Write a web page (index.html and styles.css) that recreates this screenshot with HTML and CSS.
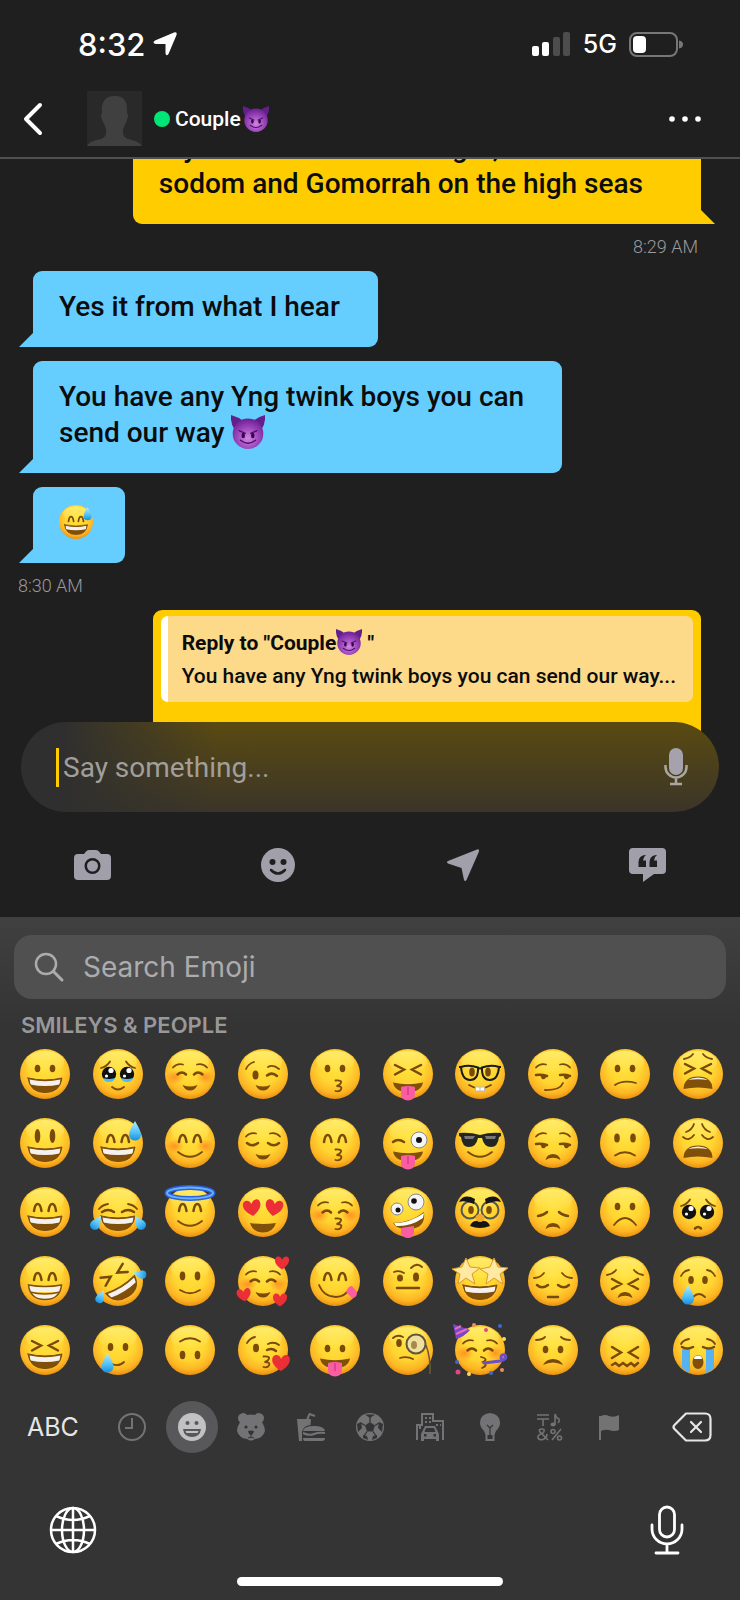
FILE: index.html
```html
<!DOCTYPE html>
<html lang="en">
<head>
  <meta charset="UTF-8">
  <meta name="viewport" content="width=device-width, initial-scale=1.0">
  <title>Chat</title>
  <link rel="stylesheet" href="styles.css">
</head>
<body>

<!-- shared emoji parts, drawn on a 50 x 50 face -->
<svg class="sprite" aria-hidden="true">
  <defs>
    <radialGradient id="skin" cx="50%" cy="38%" r="64%">
      <stop offset="0" stop-color="#ffe23c"/>
      <stop offset="0.5" stop-color="#ffd531"/>
      <stop offset="0.8" stop-color="#fdb524"/>
      <stop offset="1" stop-color="#e58a0c"/>
    </radialGradient>
    <linearGradient id="shine" x1="0" y1="0" x2="0" y2="1">
      <stop offset="0" stop-color="#fff27a" stop-opacity="0.8"/>
      <stop offset="1" stop-color="#fff27a" stop-opacity="0"/>
    </linearGradient>
    <radialGradient id="violet" cx="50%" cy="65%" r="60%">
      <stop offset="0" stop-color="#cf86e0"/>
      <stop offset="0.5" stop-color="#a44fc2"/>
      <stop offset="1" stop-color="#74259a"/>
    </radialGradient>
    <linearGradient id="water" x1="0" y1="0" x2="0" y2="1">
      <stop offset="0" stop-color="#b5ecff"/>
      <stop offset="0.6" stop-color="#4fc0f6"/>
      <stop offset="1" stop-color="#1b8ee0"/>
    </linearGradient>
    <radialGradient id="rosy">
      <stop offset="0" stop-color="#ff6a1c" stop-opacity="0.6"/>
      <stop offset="1" stop-color="#ff6a1c" stop-opacity="0"/>
    </radialGradient>

    <g id="face"><circle cx="25" cy="25" r="25" fill="url(#skin)"/><ellipse cx="25" cy="13" rx="19" ry="11" fill="url(#shine)"/></g>
    <g id="dots" class="dk"><ellipse cx="17.500" cy="19.500" rx="2.800" ry="3.800"/><ellipse cx="32.500" cy="19.500" rx="2.800" ry="3.800"/></g>
    <g id="talldots" class="dk"><ellipse cx="17.500" cy="18" rx="2.800" ry="7"/><ellipse cx="32.500" cy="18" rx="2.800" ry="7"/></g>
    <path id="arches" class="ln wide" d="M14 24Q15 17 17.700 17T21.500 24M28.500 24Q29.500 17 32.300 17T36 24"/>
    <path id="closed" class="ln wide" d="M12.500 25.500Q17 21.500 21 25.500M29 25.500Q33 21.500 37.500 25.500"/>
    <path id="lids" class="ln wide" d="M9 25Q14 29.500 20 25M30 25Q36 29.500 41 25"/>
    <path id="squint" class="ln wide" d="M12 16L21 20.500L12 25.500M38 16L29 20.500L38 25.500"/>
    <path id="brows" class="ln" d="M8 18.500Q12 14 18 15.500M32 15.500Q38 14 42 18.500"/>
    <path id="sadbrows" class="ln" d="M8 19Q14 17.500 17 12.500M42 19Q36 17.500 33 12.500"/>
    <g id="grin"><path fill="#80500b" d="M8 29Q25 33 42 29Q40 43.500 25 43.500T8 29Z"/><path fill="#f4f1ee" d="M9.500 30.500Q25 34 40.500 30.500L39.500 35.500Q25 38.500 10.500 35.500Z"/><path class="ln thin" d="M8 29Q25 33 42 29Q40 43.500 25 43.500T8 29Z"/></g>
    <path id="smile" class="ln" d="M13 34Q25 43.500 37 34"/>
    <path id="cup" class="dk" d="M17.500 36Q25 39 32.500 36Q30 41.500 25 41.500T17.500 36Z"/>
    <path id="frown" class="ln" d="M14 38Q25 24 36 38"/>
    <path id="arcfrown" class="dk" d="M17.500 42Q19 36 25 36T32.500 42Q25 37.500 17.500 42Z"/>
    <path id="kiss" class="ln" d="M25.500 31.500Q33 31 30.500 34.500Q29.500 36.500 26.500 37Q33 37 31 40.500Q29.500 43 25.500 42"/>
    <g id="tongue"><path fill="#fb5da2" d="M18 38Q25 36 32 38V44.500Q31.500 51.500 25 51.500T18 44.500Z"/><path d="M25 38V46" stroke="#d93b84" stroke-width="1.500"/></g>
    <path id="lick" d="M10 33.500Q25 37 40 33.500Q38 43 25 43T10 33.500Z" fill="#80500b"/>
    <path id="heart" fill="#ec2f36" d="M0 8C-13 0-9-9-4 -8Q-1-7.500 0-4Q2-8 5-8C10-8 12 1 0 8Z"/>
    <path id="drop" fill="url(#water)" d="M0-9Q6 1 6 5A6 5.500 0 0 1-6 5Q-6 1 0-9Z"/>
    <g id="blush"><ellipse cx="10" cy="28" rx="9" ry="7" fill="url(#rosy)"/><ellipse cx="40" cy="28" rx="9" ry="7" fill="url(#rosy)"/></g>
    <g id="puppy"><circle cx="16" cy="25" r="7.200" fill="#111"/><circle cx="34" cy="25" r="7.200" fill="#111"/><circle cx="18" cy="21.500" r="2.600" fill="#fff"/><circle cx="36" cy="21.500" r="2.600" fill="#fff"/><circle cx="13.500" cy="27" r="1.600" fill="#fff"/><circle cx="31.500" cy="27" r="1.600" fill="#fff"/></g>
    <g id="wail"><path fill="#80500b" d="M10.500 40Q11 27.500 25 27.500T39.500 40Q25 37 10.500 40Z"/><path fill="#f0ece8" d="M15 31Q19 28.500 25 28.500T35 31Q25 29.500 15 31Z"/></g>
    <path id="star" fill="#ffe9a3" stroke="#d99b2b" d="M0-13L4-4L14-3L6 3L9 13L0 7L-8 13L-6 3L-14-2L-4-4Z"/>

    <symbol id="devil" viewBox="0 0 50 50">
      <path fill="#64208a" d="M0 0Q11 3 18 9L5 21Q-1 12 0 0ZM50 0Q39 3 32 9L45 21Q51 12 50 0Z"/>
      <circle cx="25" cy="27.500" r="22.500" fill="url(#violet)"/>
      <path fill="none" stroke="#4c0f68" stroke-width="2" stroke-linecap="round" d="M12 23L21 27M38 23L29 27M14 37Q25 46 36 37"/>
      <ellipse cx="18" cy="30" rx="2.500" ry="4" fill="#320746"/><ellipse cx="32" cy="30" rx="2.500" ry="4" fill="#320746"/>
    </symbol>
    <symbol id="sweat" viewBox="0 0 50 50">
      <use href="#face"/><use href="#arches"/><use href="#grin"/><use href="#drop" x="42" y="12"/>
    </symbol>
  </defs>
</svg>

<div class="phone">
  <div class="status">
    <div class="clock">
      <span>8:32</span>
      <svg width="24" height="24" viewBox="0 0 24 24" aria-hidden="true"><path d="M21 0.500Q24.500-0.500 23.500 3L15.500 22Q13 25 12.500 21V12H3Q-1.500 11 2 8.500Z" fill="#fff"/></svg>
    </div>
    <div class="signals">
      <svg width="39" height="24" viewBox="0 0 39 24" aria-hidden="true"><rect y="14" width="7" height="10" rx="2" fill="#fff"/><rect x="10" y="10" width="7" height="14" rx="2" fill="#fff"/><rect x="21" y="5" width="7" height="19" rx="2" fill="#4d4d4d"/><rect x="31" width="7" height="24" rx="2" fill="#4d4d4d"/></svg>
      <span>5G</span>
      <svg width="55" height="25" viewBox="0 0 55 25" aria-hidden="true"><rect x="1" y="1" width="47" height="23" rx="7" fill="none" stroke="#777" stroke-width="2"/><rect x="4" y="4" width="13" height="17" rx="4" fill="#fff"/><path d="M50 8.500Q54 9 54 12.500T50 16.500Z" fill="#777"/></svg>
    </div>
  </div>

  <header class="header">
    <button class="icon-btn back" aria-label="Back"><svg width="20" height="34" viewBox="0 0 20 34"><path d="M18 3L4 17L18 31" fill="none" stroke="#fff" stroke-width="4" stroke-linecap="round" stroke-linejoin="round"/></svg></button>
    <svg class="avatar" viewBox="0 0 55 55" role="img" aria-label="Profile photo"><rect width="55" height="55" fill="#292929"/><path fill="#404040" d="M28 5C17 5 14 12 15 22Q13 24 15 29Q17 32 19 38Q20 46 14 48Q2 50 0 55H55Q52 50 41 48Q35 46 36 38Q39 32 40 29Q42 24 40 22C41 12 38 5 28 5Z"/></svg>
    <span class="online"></span>
    <h1 class="name">Couple<svg class="name-emoji" role="img" aria-label="devil"><use href="#devil"/></svg></h1>
    <button class="icon-btn more" aria-label="More"><svg width="32" height="6" viewBox="0 0 32 6" fill="#fff"><circle cx="3" cy="3" r="2.800"/><circle cx="16" cy="3" r="2.800"/><circle cx="29" cy="3" r="2.800"/></svg></button>
  </header>

  <main class="chat">
    <div class="bubble mine">My mate told me one night, it is<br>sodom and Gomorrah on the high seas</div>
    <time class="time right">8:29 AM</time>
    <div class="bubble theirs">Yes it from what I hear</div>
    <div class="bubble theirs">You have any Yng twink boys you can<br>send our way <svg class="text-emoji" role="img" aria-label="devil"><use href="#devil"/></svg></div>
    <div class="bubble theirs emoji-only"><svg class="text-emoji" role="img" aria-label="sweat smile"><use href="#sweat"/></svg></div>
    <time class="time">8:30 AM</time>
    <div class="reply">
      <blockquote class="quote">
        <strong>Reply to "Couple<svg class="quote-emoji" role="img" aria-label="devil"><use href="#devil"/></svg> "</strong>
        <span>You have any Yng twink boys you can send our way...</span>
      </blockquote>
    </div>
  </main>

  <div class="composer">
    <span class="caret"></span>
    <input class="message" type="text" placeholder="Say something..." aria-label="Message">
    <button class="icon-btn" aria-label="Record voice"><svg width="24" height="38" viewBox="0 0 24 38"><rect x="5" y="0" width="14" height="27" rx="7" fill="#a5a2ad"/><path d="M1.500 17V19A10.500 10.500 0 0 0 22.500 19V17M12 30V36M6 36H18" fill="none" stroke="#aaa79f" stroke-width="2.500"/></svg></button>
  </div>

  <nav class="tools">
    <button class="icon-btn" aria-label="Camera"><svg width="37" height="30" viewBox="0 0 37 30"><path fill="#a19fa9" fill-rule="evenodd" d="M4 4H10L12 1.500Q13 0 15 0H22Q24 0 25 1.500L27 4H33Q37 4 37 8V26Q37 30 33 30H4Q0 30 0 26V8Q0 4 4 4ZM18.500 8A8 8 0 1 0 18.500 24A8 8 0 1 0 18.500 8ZM18.500 10.500A5.500 5.500 0 1 1 18.500 21.500A5.500 5.500 0 1 1 18.500 10.500Z"/></svg></button>
    <button class="icon-btn" aria-label="Stickers"><svg width="34" height="34" viewBox="0 0 34 34"><circle cx="17" cy="17" r="17" fill="#a19fa9"/><circle cx="11.500" cy="14" r="3" fill="#1f1f1f"/><circle cx="22.500" cy="14" r="3" fill="#1f1f1f"/><path d="M10 22Q17 29 24 22" fill="none" stroke="#1f1f1f" stroke-width="2.500" stroke-linecap="round"/></svg></button>
    <button class="icon-btn" aria-label="Location"><svg width="32" height="32" viewBox="0 0 32 32"><path fill="#a19fa9" d="M30 0.500Q32.500-0.500 32 2.500L19.500 31Q18 33 17 31L14.500 19L1 14.500Q-1 13 1 12Z"/></svg></button>
    <button class="icon-btn" aria-label="Saved phrases"><svg width="37" height="34" viewBox="0 0 37 34"><path fill="#a19fa9" d="M4 0H33Q37 0 37 4V22Q37 26 33 26H25L14 34V26H4Q0 26 0 22V4Q0 0 4 0Z"/><path fill="#1f1f1f" d="M17 7Q14.500 8.500 14 12.500H17V19H9.500V14Q9.500 8 16 7ZM28 7Q25.500 8.500 25 12.500H28V19H20.500V14Q20.500 8 27 7Z"/></svg></button>
  </nav>

  <section class="keyboard">
    <label class="search">
      <svg width="30" height="30" viewBox="0 0 30 30" aria-hidden="true"><circle cx="12" cy="12" r="10" fill="none" stroke="#acacae" stroke-width="2.500"/><path d="M19.500 19.500L28 28" stroke="#acacae" stroke-width="3" stroke-linecap="round"/></svg>
      <input type="text" placeholder="Search Emoji" aria-label="Search Emoji">
    </label>
    <h2 class="group">SMILEYS &amp; PEOPLE</h2>

    <div class="emojis">
      <!-- row 1 -->
      <button aria-label="grinning"><svg viewBox="0 0 50 50"><use href="#face"/><use href="#dots"/><use href="#grin"/></svg></button>
      <button aria-label="holding back tears"><svg viewBox="0 0 50 50"><use href="#face"/><use href="#puppy"/><path fill="#4dbcf0" d="M10 29Q16 31 22 29Q21 33 16 33T10 29ZM28 29Q34 31 40 29Q39 33 34 33T28 29Z"/><use href="#sadbrows"/><path class="ln" d="M19 38Q25 43 31 38"/></svg></button>
      <button aria-label="relaxed"><svg viewBox="0 0 50 50"><use href="#face"/><use href="#blush"/><use href="#brows"/><use href="#closed"/><use href="#cup"/></svg></button>
      <button aria-label="wink"><svg viewBox="0 0 50 50"><use href="#face"/><ellipse class="dk" cx="17.500" cy="26" rx="3" ry="4.500"/><path class="ln wide" d="M29 26.500Q34 22.500 39 27"/><path class="ln" d="M8 20Q10 15 16 13M30 18Q35 15 41 20"/><use href="#cup"/></svg></button>
      <button aria-label="kissing"><svg viewBox="0 0 50 50"><use href="#face"/><use href="#dots"/><use href="#kiss"/></svg></button>
      <button aria-label="squinting with tongue"><svg viewBox="0 0 50 50"><use href="#face"/><use href="#squint"/><use href="#lick"/><use href="#tongue"/></svg></button>
      <button aria-label="nerd"><svg viewBox="0 0 50 50"><use href="#face"/><ellipse class="dk" cx="17" cy="23" rx="2.800" ry="4.500"/><ellipse class="dk" cx="33" cy="23" rx="2.800" ry="4.500"/><path class="frame" d="M6 18Q14 15.500 23 18.500Q23.500 31 15 31Q7 31 6 18ZM44 18Q36 15.500 27 18.500Q26.500 31 35 31Q43 31 44 18ZM23 20Q25 18.500 27 20M6 18H4M44 18H46"/><path class="ln" d="M14 36Q25 43 36 36"/><path fill="#fff" stroke="#bbb" d="M20.500 38H29.500V42H20.500ZM25 38V42"/></svg></button>
      <button aria-label="smirk"><svg viewBox="0 0 50 50"><use href="#face"/><use href="#brows"/><path class="ln wide" d="M8 26Q13 25 19 27M32 26Q37 25 42 27"/><path class="dk" d="M12 26H19Q18 31 14 30ZM35 26H42Q41 31 37 30Z"/><path class="ln" d="M17 41Q32 41.500 35 34"/></svg></button>
      <button aria-label="confused"><svg viewBox="0 0 50 50"><use href="#face"/><use href="#dots"/><path class="ln" d="M15 36Q23 30.500 36 34"/></svg></button>
      <button aria-label="tired"><svg viewBox="0 0 50 50"><use href="#face"/><use href="#squint" y="-1"/><path class="ln" d="M11 10Q17 9 20 5M39 10Q33 9 30 5"/><use href="#wail"/></svg></button>

      <!-- row 2 -->
      <button aria-label="smiley"><svg viewBox="0 0 50 50"><use href="#face"/><use href="#talldots"/><use href="#grin"/></svg></button>
      <button aria-label="sweat smile"><svg viewBox="0 0 50 50"><use href="#sweat"/></svg></button>
      <button aria-label="blush"><svg viewBox="0 0 50 50"><use href="#face"/><use href="#blush"/><use href="#arches"/><use href="#smile"/></svg></button>
      <button aria-label="relieved"><svg viewBox="0 0 50 50"><use href="#face"/><use href="#brows"/><use href="#lids"/><use href="#cup"/></svg></button>
      <button aria-label="kissing with smiling eyes"><svg viewBox="0 0 50 50"><use href="#face"/><use href="#arches"/><use href="#kiss"/></svg></button>
      <button aria-label="winking with tongue"><svg viewBox="0 0 50 50"><use href="#face"/><path class="ln wide" d="M10 24Q15 20 21 24"/><circle cx="36" cy="22" r="8" fill="#f5f5f7" stroke="#888"/><circle cx="36" cy="22" r="3" fill="#111"/><use href="#lick"/><use href="#tongue"/></svg></button>
      <button aria-label="sunglasses"><svg viewBox="0 0 50 50"><use href="#face"/><path fill="#252525" d="M4 15Q15 14 25 17Q35 14 46 15V18L44 19Q43 29 36 29Q29 29 27 20H23Q21 29 14 29Q7 29 6 19L4 18Z"/><path fill="#777" d="M9 18H20L18 21H10ZM30 18H41L40 21H31Z"/><use href="#smile"/></svg></button>
      <button aria-label="unamused"><svg viewBox="0 0 50 50"><use href="#face"/><use href="#brows"/><path class="ln wide" d="M8 26Q13 25 19 27M32 26Q37 25 42 27"/><path class="dk" d="M12 26H19Q18 31 14 30ZM35 26H42Q41 31 37 30Z"/><use href="#arcfrown"/></svg></button>
      <button aria-label="slightly frowning"><svg viewBox="0 0 50 50"><use href="#face"/><ellipse class="dk" cx="17" cy="20" rx="2.800" ry="4.600"/><ellipse class="dk" cx="33" cy="20" rx="2.800" ry="4.600"/><path class="ln" d="M15 37.500Q25 31 35 37.500"/></svg></button>
      <button aria-label="weary"><svg viewBox="0 0 50 50"><use href="#face"/><path class="ln" d="M13 14Q19 12 21 6M37 14Q31 12 29 6M10 19Q16 24 21 17M40 19Q34 24 29 17"/><use href="#wail"/></svg></button>

      <!-- row 3 -->
      <button aria-label="smile"><svg viewBox="0 0 50 50"><use href="#face"/><use href="#arches"/><use href="#grin"/></svg></button>
      <button aria-label="tears of joy"><svg viewBox="0 0 50 50"><use href="#face"/><path class="ln" d="M6 22Q9 18 15 17M44 22Q41 18 35 17"/><path class="ln wide" d="M9 25Q15 21 21 25M29 25Q35 21 41 25"/><use href="#grin"/><use href="#drop" transform="translate(4 35) rotate(35) scale(.8)"/><use href="#drop" transform="translate(46 35) rotate(-35) scale(.8)"/></svg></button>
      <button aria-label="innocent"><svg viewBox="0 0 50 50"><use href="#face"/><ellipse cx="25" cy="6" rx="23" ry="5.500" fill="none" stroke="#2b62e0" stroke-width="5"/><ellipse cx="25" cy="6" rx="23" ry="5.500" fill="none" stroke="#69b2fb" stroke-width="2"/><use href="#arches"/><use href="#smile"/></svg></button>
      <button aria-label="heart eyes"><svg viewBox="0 0 50 50"><use href="#face"/><use href="#heart" transform="translate(14 21) rotate(-8)"/><use href="#heart" transform="translate(36 21) rotate(8)"/><path fill="#80500b" d="M12 36Q25 38 38 36Q35 45.500 25 45.500T12 36Z"/></svg></button>
      <button aria-label="kissing with closed eyes"><svg viewBox="0 0 50 50"><use href="#face"/><use href="#blush"/><use href="#brows"/><use href="#closed"/><use href="#kiss"/></svg></button>
      <button aria-label="zany"><svg viewBox="0 0 50 50"><use href="#face"/><circle cx="33" cy="15" r="8" fill="#f5f5f7" stroke="#888"/><circle cx="31" cy="14" r="2.800" fill="#111"/><circle cx="14" cy="22" r="6" fill="#f5f5f7" stroke="#888"/><circle cx="15" cy="23" r="2.500" fill="#111"/><path fill="#80500b" d="M10 36Q27 36 41 25Q43 41 27 42Q14 43 10 36Z"/><path fill="#fff" d="M11 36Q27 36 41 26L40 31Q27 40 13 39Z"/><path fill="#fb5da2" d="M18 41L31 39V46Q30 51 25 51T18 46Z"/></svg></button>
      <button aria-label="disguised"><svg viewBox="0 0 50 50"><use href="#face"/><ellipse class="dk" cx="16" cy="23" rx="2.800" ry="4"/><ellipse class="dk" cx="34" cy="23" rx="2.800" ry="4"/><circle cx="15" cy="23" r="8.500" fill="none" stroke="#555" stroke-width="2"/><circle cx="35" cy="23" r="8.500" fill="none" stroke="#555" stroke-width="2"/><path d="M4 15Q9 6 20 12L19 17Q10 13 4 15ZM46 15Q41 6 30 12L31 17Q40 13 46 15ZM15 39Q17 33 25 34Q33 33 35 39Q25 43 15 39Z" fill="#151515"/><ellipse cx="25" cy="31" rx="4.500" ry="4" fill="#f5a926"/></svg></button>
      <button aria-label="disappointed"><svg viewBox="0 0 50 50"><use href="#face"/><path class="ln wide" d="M10 29Q16 28 19 25M40 29Q34 28 31 25"/><use href="#arcfrown"/></svg></button>
      <button aria-label="frowning"><svg viewBox="0 0 50 50"><use href="#face"/><use href="#dots"/><use href="#frown"/></svg></button>
      <button aria-label="pleading"><svg viewBox="0 0 50 50"><use href="#face"/><use href="#puppy"/><use href="#sadbrows"/><path class="ln wide" d="M22 41.500Q25 38.500 28 41.500"/></svg></button>

      <!-- row 4 -->
      <button aria-label="beaming"><svg viewBox="0 0 50 50"><use href="#face"/><use href="#arches"/><path fill="#f4f1ee" stroke="#80500b" stroke-width="1.500" d="M8.500 29Q25 32 41.500 29Q40 43.500 25 43.500T8.500 29ZM10 36Q25 40 40 36"/></svg></button>
      <button aria-label="rolling on the floor laughing"><svg viewBox="0 0 50 50"><use href="#face"/><g transform="rotate(-32 25 25)"><use href="#squint" y="-3"/><use href="#grin"/></g><use href="#drop" transform="translate(8 40) rotate(25) scale(.7)"/><use href="#drop" transform="translate(46 18) rotate(-80) scale(.7)"/></svg></button>
      <button aria-label="slight smile"><svg viewBox="0 0 50 50"><use href="#face"/><ellipse class="dk" cx="17.500" cy="20" rx="2.800" ry="4.400"/><ellipse class="dk" cx="32.500" cy="20" rx="2.800" ry="4.400"/><path class="ln" d="M15 34Q25 40.500 35 34"/></svg></button>
      <button aria-label="smiling with hearts"><svg viewBox="0 0 50 50"><use href="#face"/><use href="#blush"/><use href="#brows"/><use href="#closed"/><use href="#cup"/><use href="#heart" transform="translate(44 7) scale(.8)"/><use href="#heart" transform="translate(6 39) scale(.8) rotate(-10)"/><use href="#heart" transform="translate(42 44) scale(.8)"/></svg></button>
      <button aria-label="yum"><svg viewBox="0 0 50 50"><use href="#face"/><use href="#arches"/><path class="ln" d="M9 29Q14 41 26 41Q35 41 40 32"/><path fill="#fb5da2" d="M36 36Q39 29 42 30L47 36Q47 42 42 42Z"/></svg></button>
      <button aria-label="raised eyebrow"><svg viewBox="0 0 50 50"><use href="#face"/><ellipse class="dk" cx="17" cy="22" rx="3" ry="3.500"/><ellipse class="dk" cx="33" cy="21" rx="3" ry="4.500"/><path class="ln" d="M11 16Q16 14 21 17M28 12Q34 6 39 11"/><path class="ln wide" d="M14 32H36"/></svg></button>
      <button aria-label="star struck"><svg viewBox="0 0 50 50"><use href="#face"/><use href="#grin"/><use href="#star" x="11" y="15"/><use href="#star" x="39" y="15"/></svg></button>
      <button aria-label="pensive"><svg viewBox="0 0 50 50"><use href="#face"/><path class="ln" d="M6 22Q12 22 16 17M44 22Q38 22 34 17"/><use href="#lids" y="4"/><path class="ln wide" d="M20 41H30"/></svg></button>
      <button aria-label="persevering"><svg viewBox="0 0 50 50"><use href="#face"/><path class="ln" d="M7 19Q13 18 16 14M43 19Q37 18 34 14"/><path class="ln wide" d="M12 23L21 28L12 33M38 23L29 28L38 33"/><use href="#arcfrown"/></svg></button>
      <button aria-label="crying"><svg viewBox="0 0 50 50"><use href="#face"/><path class="ln" d="M8 20Q10 15 16 14M42 20Q40 15 34 14"/><ellipse class="dk" cx="18" cy="24" rx="2.800" ry="4"/><ellipse class="dk" cx="32" cy="24" rx="2.800" ry="4"/><path class="ln" d="M20 41Q26 35 32 41"/><use href="#drop" x="15" y="38"/></svg></button>

      <!-- row 5 -->
      <button aria-label="laughing"><svg viewBox="0 0 50 50"><use href="#face"/><use href="#squint"/><use href="#grin"/></svg></button>
      <button aria-label="smiling with tear"><svg viewBox="0 0 50 50"><use href="#face"/><ellipse class="dk" cx="17.500" cy="22" rx="2.800" ry="4"/><ellipse class="dk" cx="32.500" cy="22" rx="2.800" ry="4"/><path class="ln" d="M19 39Q26 42 31 37"/><use href="#drop" x="14.500" y="37"/></svg></button>
      <button aria-label="upside down"><svg viewBox="0 0 50 50"><use href="#face"/><ellipse class="dk" cx="17.500" cy="30" rx="2.800" ry="4.200"/><ellipse class="dk" cx="32.500" cy="30" rx="2.800" ry="4.200"/><path class="ln" d="M15 16.500Q25 10 35 16.500"/></svg></button>
      <button aria-label="blowing a kiss"><svg viewBox="0 0 50 50"><use href="#face"/><ellipse class="dk" cx="18" cy="23" rx="3" ry="4.200"/><path class="ln" d="M9 18Q12 13 17 12M30 19Q36 16 41 20"/><path class="ln wide" d="M29 25Q34 22.500 38 26"/><use href="#kiss"/><use href="#heart" transform="translate(43 38)"/></svg></button>
      <button aria-label="tongue out"><svg viewBox="0 0 50 50"><use href="#face"/><use href="#dots" y="4"/><use href="#lick"/><use href="#tongue"/></svg></button>
      <button aria-label="monocle"><svg viewBox="0 0 50 50"><use href="#face"/><ellipse class="dk" cx="16" cy="18" rx="2.800" ry="4"/><path class="ln" d="M10 13Q14 9 20 12M17 33Q24 31 30 34"/><path d="M43 20Q48 34 47 49" fill="none" stroke="#6b5a34" stroke-width="1.500"/><circle cx="33" cy="19" r="9.500" fill="#f0e0a0" stroke="#63543a" stroke-width="2"/><ellipse cx="31" cy="20" rx="3" ry="4" fill="#a58a4b"/></svg></button>
      <button aria-label="partying"><svg viewBox="0 0 50 50"><use href="#face"/><use href="#blush"/><use href="#brows"/><use href="#closed"/><path fill="#7746c9" d="M-2-1L15 5Q9 12 1 14Z"/><path d="M0 4L6 1M1 9L12 4" stroke="#e76bb5" stroke-width="2"/><path class="ln" d="M26 32Q34 34 28 37Q34 40 27 43"/><path d="M29 38L45 36Q53 34 50 30Q46 29 46 33" fill="none" stroke="#6950c9" stroke-width="3" stroke-linecap="round"/><g fill="#e44583"><circle cx="31" cy="5" r="2"/><circle cx="3" cy="47" r="2.500"/></g><g fill="#ffd95a"><circle cx="49" cy="14" r="2"/><circle cx="14" cy="49" r="2"/></g><g fill="#3f68cf"><circle cx="45" cy="1" r="2"/><circle cx="2" cy="37" r="2"/><circle cx="36" cy="48" r="2"/></g><g fill="#f28b54"><circle cx="19" cy="0" r="2"/><circle cx="47" cy="45" r="2"/></g></svg></button>
      <button aria-label="worried"><svg viewBox="0 0 50 50"><use href="#face"/><path class="ln" d="M8 15Q14 15 17 12M42 15Q36 15 33 12"/><use href="#dots" y="5"/><path class="dk" d="M15 40Q18 34 25 34T35 40Q25 35 15 40Z"/></svg></button>
      <button aria-label="confounded"><svg viewBox="0 0 50 50"><use href="#face"/><path class="ln wide" d="M12 22L21 27.500L12 33M38 22L29 27.500L38 33"/><path class="ln wide" d="M12 40L15.500 38L19 41L23 38L27 41L31 38L34.500 41L38 38"/></svg></button>
      <button aria-label="sobbing"><svg viewBox="0 0 50 50"><use href="#face"/><path fill="#56b2f1" d="M9 24H17V48Q12 46 9 43ZM33 24H41V43Q38 46 33 48Z"/><path class="ln" d="M8 19Q10 15 16 14M42 19Q40 15 34 14"/><path class="ln wide" d="M9 22Q14 25 20 22M30 22Q36 25 41 22"/><ellipse cx="25" cy="37" rx="5.500" ry="7" fill="#80500b"/><path fill="#fff" d="M21 34Q21 30.500 25 30.500T29 34Z"/></svg></button>
    </div>

    <div class="categories">
      <button class="abc">ABC</button>
      <div class="tabs">
        <button class="tab" aria-label="Recent"><svg viewBox="0 0 28 28"><circle cx="14" cy="14" r="13" class="st"/><path d="M14 5V15H7" class="st"/></svg></button>
        <button class="tab active" aria-label="Smileys"><svg viewBox="0 0 28 28"><circle cx="14" cy="14" r="14" fill="#c2c2c4"/><circle cx="9.500" cy="10" r="2" fill="#58585a"/><circle cx="18.500" cy="10" r="2" fill="#58585a"/><path d="M5 16H23Q22 24 14 24T5 16Z" fill="#58585a"/><path d="M7.500 18H20.500L19.500 20H8.500Z" fill="#c2c2c4"/></svg></button>
        <button class="tab" aria-label="Animals"><svg viewBox="0 0 28 28"><path class="fl" d="M6 0Q9 0 10 2Q14 1 18 2Q19 0 22 0Q27 1 27 5Q27 8 25 9Q28 14 28 18Q26 25 18 26Q14 29 10 26Q2 25 0 18Q0 14 3 9Q1 8 1 5Q1 1 6 0Z"/><circle cx="9" cy="14" r="1.600" fill="#343434"/><circle cx="19" cy="14" r="1.600" fill="#343434"/><path fill="#343434" d="M11 18Q14 17 17 18Q16 22 14 22T11 18Z"/><path d="M14 21V24M11 25Q14 23.500 17 25" stroke="#343434" fill="none"/></svg></button>
        <button class="tab" aria-label="Food"><svg viewBox="0 0 28 28"><path class="fl" d="M0 6H14L13.500 12Q6 13 5 19V28H2ZM6 18Q7 13 17 13T28 18ZM6 25H28Q28 28 25 28H8Q6 28 6 25Z"/><path class="st" d="M10 7L12.500 1L18 3M6 20Q12 23 17 21T28 20"/></svg></button>
        <button class="tab" aria-label="Activity"><svg viewBox="0 0 28 28"><circle cx="14" cy="14" r="14" class="fl"/><path d="M14 9L19 12.500L17 18.500H11L9 12.500ZM9 1.500H19L14 5ZM1 11L5 9L6 15L2 19ZM27 11L23 9L22 15L26 19ZM7 22L11 23L12 27L7 25ZM21 22L17 23L16 27L21 25Z" fill="#343434"/><path d="M14 4V9M5 10L9 12.500M23 10L19 12.500M11 18.500L8 23M17 18.500L20 23" stroke="#343434" stroke-width="1.300"/></svg></button>
        <button class="tab" aria-label="Travel"><svg viewBox="0 0 28 28"><path class="st" d="M1 27V12H6V1H17V8H27V27M4 11V16"/><path stroke="#737375" stroke-width="2" stroke-dasharray="2 2" d="M9 5H15M9 9H15M20 12H25"/><path class="fl" fill-rule="evenodd" d="M9 13H19L22 19Q23 20 23 22V28H20V26H8V28H5V22Q5 20 6 19ZM10 15L8.500 19H19.500L18 15ZM8 21V23.500H10.500V21ZM17.500 21V23.500H20V21Z"/></svg></button>
        <button class="tab" aria-label="Objects"><svg viewBox="0 0 28 28"><path class="fl" d="M14 0Q24 1 24 10Q24 14 20 18Q19 20 18.500 22H9.500Q9 20 8 18Q4 14 4 10Q4 1 14 0Z"/><path class="st" d="M10.500 22V27H17.500V22"/><path d="M11 12L14 15L17 12M14 15V22" stroke="#343434" stroke-width="1.200" fill="none"/></svg></button>
        <button class="tab" aria-label="Symbols"><svg viewBox="0 0 28 28"><path class="st slim" d="M2 2H14M2 6H14M8 6V13M20 12V1Q21 5 24 6Q25 8 23 10"/><ellipse cx="18" cy="11.500" rx="2.500" ry="2" class="fl"/><path class="st slim" d="M13 27L5 19Q3 16 7 16T8 20Q2 22 3 25Q5 28 9 26Q12 24 12 21M26 16L17 27"/><circle cx="18" cy="18.500" r="2" class="st slim"/><circle cx="24.500" cy="25" r="2" class="st slim"/></svg></button>
        <button class="tab" aria-label="Flags"><svg viewBox="0 0 28 28"><path class="fl" d="M4 3H6Q10 1 14 3Q19 5 24 2V17Q19 19 14 17Q10 16 6 18V27H4Z"/></svg></button>
      </div>
      <button class="icon-btn" aria-label="Delete"><svg width="40" height="30" viewBox="0 0 40 30"><path d="M14 1.500H33Q38.500 1.500 38.500 7V23Q38.500 28.500 33 28.500H14L2.500 17Q0.500 15 2.500 13ZM19 10L29 20M29 10L19 20" fill="none" stroke="#e6e6e6" stroke-width="2.200" stroke-linecap="round" stroke-linejoin="round"/></svg></button>
    </div>

    <div class="bottom">
      <button class="icon-btn" aria-label="Next keyboard"><svg width="48" height="48" viewBox="0 0 48 48"><g fill="none" stroke="#fff" stroke-width="2.500"><circle cx="24" cy="24" r="22"/><ellipse cx="24" cy="24" rx="11" ry="22"/><path d="M24 2V46M2 24H46M7 10Q24 18 41 10M7 38Q24 30 41 38"/></g></svg></button>
      <button class="icon-btn" aria-label="Dictate"><svg width="34" height="50" viewBox="0 0 34 50"><g fill="none" stroke="#fff" stroke-width="2.800" stroke-linecap="round"><rect x="9.500" y="2" width="15" height="30" rx="7.500"/><path d="M2 20V24A15 15 0 0 0 32 24V20M17 39V48M6 48H28"/></g></svg></button>
    </div>
    <div class="home"></div>
  </section>
</div>

</body>
</html>
```
FILE: styles.css
```css
* {
  box-sizing: border-box;
}

body {
  margin: 0;
  background: #1f1f1f;
  color: #fff;
  font-family: Roboto, "Liberation Sans", sans-serif;
}

button {
  padding: 0;
  border: 0;
  background: none;
  color: inherit;
  font: inherit;
}

input {
  min-width: 0;
  padding: 0;
  border: 0;
  outline: 0;
  background: none;
  color: #fff;
  font: inherit;
}

svg {
  overflow: visible;
}

.sprite {
  position: absolute;
  width: 0;
  height: 0;
}

/* emoji strokes and fills */
.ln {
  fill: none;
  stroke: #7a4a0a;
  stroke-width: 1.8;
  stroke-linecap: round;
}

.wide {
  stroke-width: 2.5;
}

.thin {
  stroke-width: 1;
}

.dk {
  fill: #7a4a0a;
}

.frame {
  fill: none;
  stroke: #1b1b1b;
  stroke-width: 2;
}

.phone {
  display: flex;
  flex-direction: column;
  height: 100vh;
}

.icon-btn {
  display: flex;
  align-items: center;
  justify-content: center;
}

/* status bar */
.status {
  display: flex;
  justify-content: space-between;
  align-items: center;
  height: 88px;
  padding: 0 56px 0 78px;
  font-family: Inter, sans-serif;
}

.clock {
  display: flex;
  align-items: center;
  gap: 8px;
  font-size: 31px;
  font-weight: 500;
}

.signals {
  display: flex;
  align-items: center;
  gap: 12px;
  font-size: 25px;
  font-weight: 500;
}

/* header */
.header {
  display: flex;
  align-items: center;
  height: 71px;
  padding: 0 39px 8px 22px;
  border-bottom: 2px solid #505050;
}

.avatar {
  width: 55px;
  height: 55px;
  margin-left: 45px;
}

.online {
  width: 16px;
  height: 16px;
  margin: 0 5px 0 12px;
  border-radius: 50%;
  background: #00e676;
}

.name {
  display: flex;
  align-items: center;
  margin: 0;
  font-size: 21px;
  font-weight: 500;
}

.name-emoji {
  width: 26px;
  height: 26px;
  margin-left: 2px;
}

.more {
  margin-left: auto;
}

/* messages */
.chat {
  display: flex;
  flex: 1;
  flex-direction: column;
  justify-content: flex-end;
  align-items: flex-start;
  min-height: 0;
  padding: 0 39px 0 33px;
  overflow: hidden;
}

.bubble {
  position: relative;
  flex-shrink: 0;
  margin-bottom: 14px;
  padding: 18px 38px 22px 26px;
  border-radius: 9px;
  background: #65ceff;
  color: #0c0c0c;
  font-size: 28px;
  font-weight: 500;
  line-height: 36px;
}

.bubble::after {
  content: "";
  position: absolute;
  bottom: 0;
  width: 24px;
  height: 24px;
  background: inherit;
}

.theirs {
  border-bottom-left-radius: 0;
}

.theirs::after {
  left: -14px;
  clip-path: polygon(0 100%, 100% 0, 100% 100%);
}

.mine {
  align-self: flex-end;
  padding-right: 58px;
  border-bottom-right-radius: 0;
  background: #ffcc00;
}

.mine::after {
  right: -14px;
  clip-path: polygon(0 0, 100% 100%, 0 100%);
}

.emoji-only {
  padding-right: 32px;
}

.text-emoji {
  width: 34px;
  height: 34px;
  vertical-align: -7px;
}

.time {
  flex-shrink: 0;
  margin: -2px 0 13px -15px;
  color: #9a9a9c;
  font-size: 18px;
  font-weight: 300;
  line-height: 22px;
}

.right {
  align-self: flex-end;
  margin-right: 3px;
}

.reply {
  flex-shrink: 0;
  align-self: flex-end;
  padding: 6px 8px 33px;
  border-radius: 9px 9px 0 0;
  background: #ffcc00;
}

.quote {
  display: flex;
  flex-direction: column;
  margin: 0;
  padding: 11px 17px 9px 14px;
  border-left: 7px solid #fff;
  border-radius: 7px;
  background: #fdd98a;
  color: #0c0c0c;
  font-size: 21px;
  font-weight: 500;
  line-height: 33px;
}

.quote strong {
  font-weight: 700;
}

.quote-emoji {
  width: 26px;
  height: 26px;
  vertical-align: -5px;
}

/* composer */
.composer {
  position: relative;
  display: flex;
  align-items: center;
  height: 90px;
  margin: -13px 21px 0;
  padding: 0 31px 0 35px;
  border-radius: 45px;
  background: linear-gradient(to right, #2f2f2f 6%, rgba(47, 47, 47, 0) 28%), linear-gradient(#5a4a11, #3b3528);
}

.caret {
  width: 3px;
  height: 39px;
  margin-right: 4px;
  background: #ffcc00;
}

.message {
  flex: 1;
  font-size: 28px;
}

.message::placeholder {
  color: #a19f9b;
  opacity: 1;
}

.tools {
  display: grid;
  grid-template-columns: repeat(4, 1fr);
  height: 105px;
}

/* keyboard */
.keyboard {
  padding-top: 18px;
  background: linear-gradient(#404040, #343434 110px);
  font-family: Inter, sans-serif;
}

.search {
  display: flex;
  align-items: center;
  gap: 19px;
  height: 64px;
  margin: 0 14px;
  padding: 0 20px;
  border-radius: 18px;
  background: #505051;
  font-size: 28px;
}

.search input {
  flex: 1;
}

.search input::placeholder {
  color: #acacae;
  opacity: 1;
}

.group {
  margin: 12px 21px 10px;
  color: #98989b;
  font-size: 22px;
  font-weight: 600;
  line-height: 28px;
}

.emojis {
  display: grid;
  grid-template-columns: repeat(10, 50px);
  justify-content: space-between;
  row-gap: 19px;
  padding: 0 17px 0 20px;
}

.emojis svg {
  display: block;
  width: 50px;
  height: 50px;
}

.categories {
  display: flex;
  align-items: center;
  justify-content: space-between;
  height: 52px;
  margin-top: 26px;
  padding: 0 28px 0 27px;
}

.abc {
  font-size: 25px;
  color: #e6e6e6;
}

.tabs {
  display: flex;
  flex: 1;
  justify-content: space-between;
  margin: 0 37px 0 27px;
}

.tab {
  display: grid;
  place-items: center;
  width: 52px;
  height: 52px;
  border-radius: 50%;
}

.tab svg {
  width: 28px;
  height: 28px;
}

.active {
  background: #58585a;
}

.st {
  fill: none;
  stroke: #737375;
  stroke-width: 2;
}

.slim {
  stroke-width: 1.6;
}

.fl {
  fill: #737375;
}

.bottom {
  display: flex;
  justify-content: space-between;
  padding: 52px 56px 0 49px;
}

.home {
  width: 36%;
  height: 9px;
  margin: 22px auto 14px;
  border-radius: 5px;
  background: #fff;
}
```
